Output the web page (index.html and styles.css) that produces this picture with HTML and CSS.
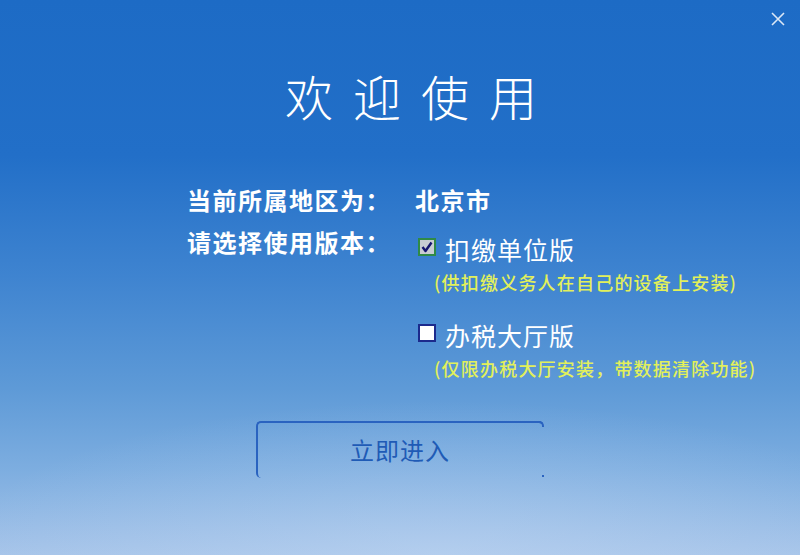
FILE: index.html
```html
<!DOCTYPE html>
<html lang="zh-CN">
<head>
<meta charset="utf-8">
<title>欢迎使用</title>
<link rel="stylesheet" href="styles.css">
</head>
<body>
<div class="window">
  <div class="close" aria-label="关闭">
    <svg width="16" height="16" viewBox="0 0 16 16"><path d="M2 2 L14 14 M14 2 L2 14" stroke="#dbe7f6" stroke-width="1.6" fill="none"/></svg>
  </div>
  <h1 class="title">欢迎使用</h1>
  <div class="form">
    <div class="row">
      <div class="label">当前所属地区为：</div>
      <div class="value">北京市</div>
    </div>
    <div class="row">
      <div class="label">请选择使用版本：</div>
      <div class="options">
        <div class="option">
          <span class="box checked">
            <svg width="14" height="14" viewBox="0 0 14 14"><path d="M2.5 7 L5.5 11 L11.5 2.5" stroke="#14146e" stroke-width="2.4" fill="none" stroke-linejoin="round"/></svg>
          </span>
          <span class="opt-text">扣缴单位版</span>
        </div>
        <div class="sub">(供扣缴义务人在自己的设备上安装)</div>
        <div class="option second">
          <span class="box"></span>
          <span class="opt-text">办税大厅版</span>
        </div>
        <div class="sub">(仅限办税大厅安装，带数据清除功能)</div>
      </div>
    </div>
  </div>
  <div class="actions">
    <div class="enter">立即进入</div>
  </div>
</div>
</body>
</html>
```

FILE: styles.css
```css
html, body {
  margin: 0;
  padding: 0;
}
body {
  font-family: "Noto Sans CJK SC", "Noto Sans", sans-serif;
}
.window {
  position: relative;
  width: 800px;
  height: 555px;
  overflow: hidden;
  color: #ffffff;
  background:
    radial-gradient(ellipse 700px 220px at 55% 100%, rgba(200,220,245,0.4), rgba(200,220,245,0) 70%),
    linear-gradient(180deg, #1d6bc5 0%, #226fc8 28%, #3f84d0 50%, #5e9ad7 70%, #7eaee0 85%, #a6c4e9 100%);
  display: flex;
  flex-direction: column;
}
.close {
  position: absolute;
  top: 11px;
  right: 14px;
  width: 16px;
  height: 16px;
}
.close svg { display: block; }
.title {
  margin: 0;
  padding-top: 67px;
  padding-left: 42px;
  text-align: center;
  font-size: 48px;
  line-height: 56px;
  font-weight: 300;
  letter-spacing: 20px;
}
.form {
  margin-top: 61px;
  padding-left: 187px;
  display: flex;
  flex-direction: column;
  gap: 10px;
}
.row {
  display: grid;
  grid-template-columns: 228px 1fr;
  align-items: start;
}
.label, .value {
  font-size: 24px;
  line-height: 32px;
  font-weight: 700;
  letter-spacing: 1.5px;
}
.options {
  padding-top: 7px;
  padding-left: 3px;
  display: flex;
  flex-direction: column;
}
.option {
  display: flex;
  align-items: center;
  height: 32px;
}
.option.second {
  margin-top: 25px;
}
.box {
  width: 14px;
  height: 14px;
  border: 2px solid #1c2a8c;
  background: #ffffff;
  display: flex;
  align-items: center;
  justify-content: center;
  margin-top: -4px;
}
.box.checked {
  border-color: #2f8a46;
  background: #c8ccd3;
}
.box svg { display: block; }
.opt-text {
  margin-left: 9px;
  font-size: 25px;
  line-height: 32px;
  font-weight: 400;
  letter-spacing: 1px;
}
.sub {
  margin-top: 5px;
  margin-left: 16px;
  font-size: 18px;
  line-height: 24px;
  font-weight: 500;
  color: #e2f05a;
  letter-spacing: 1.2px;
}
.actions {
  margin-top: 41px;
  display: flex;
  justify-content: center;
}
.enter {
  position: relative;
  box-sizing: border-box;
  width: 288px;
  height: 57px;
  border-top: 2px solid #2a63c0;
  border-left: 2px solid #2a63c0;
  border-right: 2px solid transparent;
  border-radius: 5px 5px 0 5px;
  display: flex;
  align-items: center;
  justify-content: center;
  font-size: 24px;
  letter-spacing: 1px;
  color: #1f5bb6;
  padding-bottom: 2px;
}
.enter::after {
  content: "";
  position: absolute;
  top: -2px;
  right: -2px;
  width: 5px;
  height: 6px;
  border-top: 2px solid #2a63c0;
  border-right: 2px solid #2a63c0;
  border-top-right-radius: 5px;
  box-sizing: border-box;
}
.enter::before {
  content: "";
  position: absolute;
  bottom: 1px;
  right: -2px;
  width: 2px;
  height: 2px;
  background: #2a63c0;
}
```
